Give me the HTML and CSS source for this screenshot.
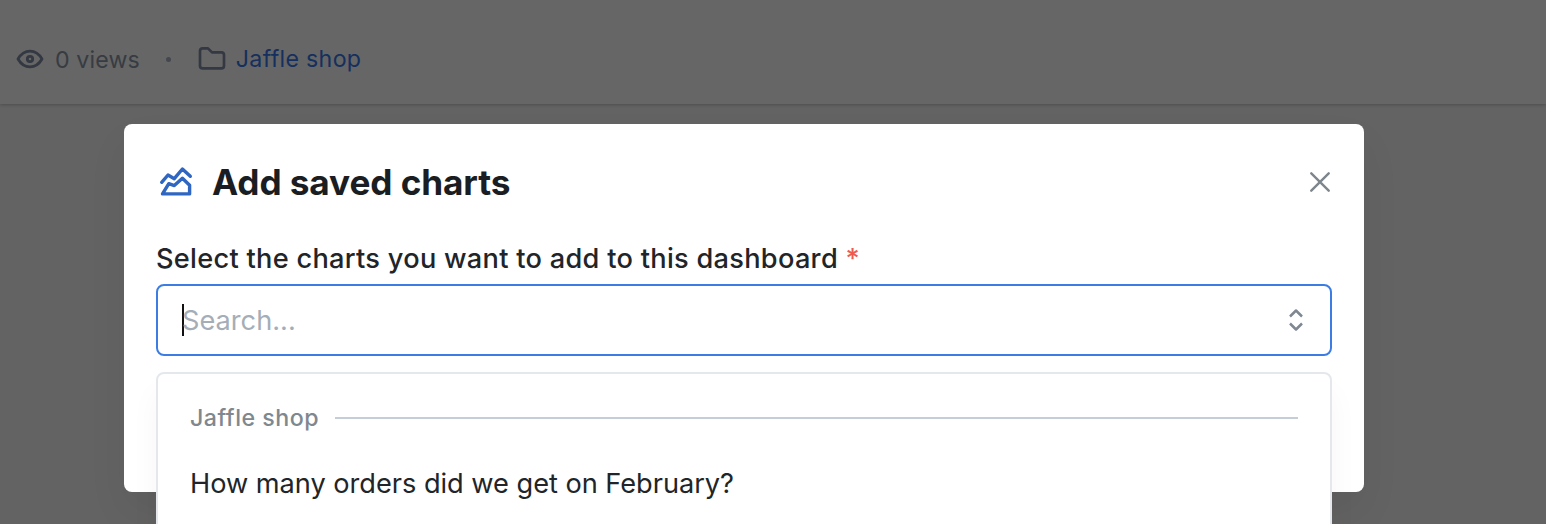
FILE: index.html
```html
<!DOCTYPE html>
<html lang="en">
<head>
<meta charset="utf-8">
<title>Add saved charts</title>
<link rel="stylesheet" href="styles.css">
</head>
<body>
<header class="page-header">
  <svg class="eye" viewBox="0 0 28 28"><circle cx="14" cy="14" r="2.7"/><path d="M26 14c-3 5.200-7 7.900-12 7.900S5 19.200 2 14c3-5.200 7-7.900 12-7.900S23 8.800 26 14z"/></svg>
  <span class="views">0 views</span>
  <span class="dot"></span>
  <svg class="folder" viewBox="0 0 24 24"><path d="M5 4h4l3 3h7a2 2 0 0 1 2 2v8a2 2 0 0 1-2 2H5a2 2 0 0 1-2-2V6a2 2 0 0 1 2-2"/></svg>
  <a class="space">Jaffle shop</a>
</header>
<div class="overlay">
  <section class="modal">
    <div class="modal-header">
      <svg class="chart" viewBox="0 0 40 40"><path d="M5.700 20.300L12 13l6.300 3.700L26.400 7l7.900 7.300M6.500 31.900l6.300-10.200 5.500 1.900 8.100-7.300 7.200 7v8.600z"/></svg>
      <h1 class="title">Add saved charts</h1>
      <svg class="close" viewBox="0 0 20 20"><path d="M1.300 1.300l17.400 17.400M18.700 1.300L1.300 18.700"/></svg>
    </div>
    <label class="label"><span class="label-text">Select the charts you want to add to this dashboard</span> <span class="required">*</span></label>
    <div class="input">
      <span class="caret"></span><span class="placeholder">Search...</span>
      <svg class="selector" viewBox="0 0 16 24"><path d="M2 8.500L8 2.500l6 6M2 15.500l6 6 6-6"/></svg>
    </div>
    <div class="dropdown">
      <div class="group"><span class="group-name">Jaffle shop</span></div>
      <div class="option">How many orders did we get on February?</div>
    </div>
  </section>
</div>
</body>
</html>
```
FILE: styles.css
```css
* { box-sizing: border-box; }
html { height: 524px; overflow: hidden; }
body { margin: 0; height: 524px; overflow: hidden; background: #636363; font-family: Inter, sans-serif; }
svg { fill: none; stroke: currentColor; stroke-width: 2; stroke-linecap: round; stroke-linejoin: round; flex: none; }
.page-header { height: 104px; padding: 14px 0 0 16px; display: flex; align-items: center; background: #666; box-shadow: 0 1px 3px rgba(0,0,0,.22); color: #333842; font-size: 23.2px; }
.eye { width: 28px; height: 28px; margin: 0 11px 0 0; stroke-width: 2.8; }
.views { margin-top: 1px; letter-spacing: .1px; color: #373c43; }
.dot { width: 5px; height: 5px; border-radius: 50%; background: #43484e; margin: 0 26px 0 26px; }
.folder { width: 32px; height: 32px; margin: 0 8px 0 -1px; }
.space { color: #152f5e; letter-spacing: .3px; margin-top: -1px; }
.overlay { position: absolute; inset: 0; padding: 124px 0 0 124px; overflow: hidden; }
.modal { width: 1240px; height: 368px; padding: 32px; background: #fff; border-radius: 8px; box-shadow: 0 20px 40px rgba(0,0,0,.06); }
.modal-header { height: 52px; display: flex; align-items: center; }
.chart { width: 40px; height: 40px; color: #2f66c1; stroke-width: 3.4; stroke-linejoin: round; }
.title { flex: 1; margin: 0 0 0 16px; font-size: 35.2px; line-height: 52px; font-weight: 700; letter-spacing: -.1px; color: #1a1d21; }
.close { width: 20px; height: 20px; margin-right: 2px; color: #7d858d; stroke-width: 2.4; }
.label { display: block; height: 40px; margin: 31px 0 5px; line-height: 40px; font-size: 27.2px; letter-spacing: .28px; font-weight: 500; color: #212529; }
.required { color: #ef5a50; }
.input { height: 72px; padding: 0 26px 0 24px; display: flex; align-items: center; border: 2px solid #3b7de3; border-radius: 8px; font-size: 27.2px; color: #a5adb7; }
.caret { width: 2px; height: 32px; background: #111; margin-right: -2px; }
.placeholder { flex: 1; }
.selector { width: 16px; height: 24px; color: #7f8790; stroke-width: 2.5; stroke-linecap: butt; }
.dropdown { height: 200px; margin-top: 16px; padding: 24px 32px; background: #fff; border: 2px solid #e4e8ed; border-radius: 8px; box-shadow: 0 20px 30px rgba(0,0,0,.04); }
.group { display: flex; align-items: center; height: 40px; font-size: 23.2px; letter-spacing: .5px; font-weight: 500; color: #7f878f; }
.group::after { content: ""; flex: 1; height: 2px; margin-left: 16px; background: #c5cdd6; }
.option { margin-top: 26px; line-height: 40px; font-size: 27.2px; letter-spacing: -.03px; color: #212529; }
```
